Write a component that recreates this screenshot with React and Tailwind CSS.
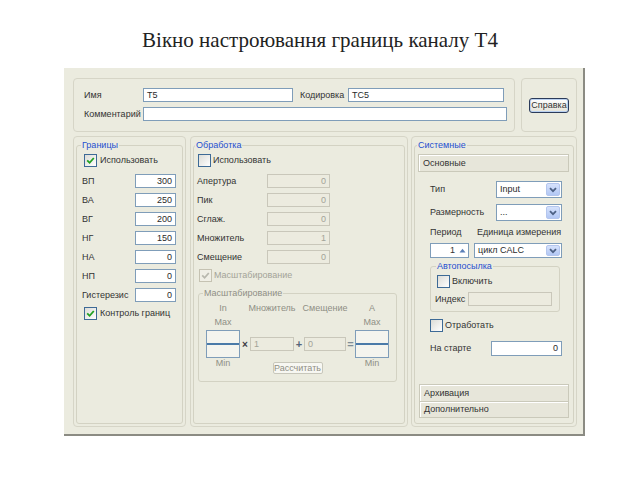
import React from 'react';

const sans = "font-['Liberation_Sans',Arial,sans-serif]";

function Field({ value = '', right = false, disabled = false, className = '' }) {
  return (
    <div
      className={`flex items-center px-[3px] border text-[9px] leading-[11px] ${right ? 'justify-end' : ''} ${
        disabled ? 'border-[#c9c7ba] bg-[#ecebdf] text-[#a3a398]' : 'border-[#7f9db9] bg-white text-[#2a2a2a]'
      } ${className}`}
    >
      {value}
    </div>
  );
}

function Check({ checked = false, disabled = false }) {
  return (
    <div
      className={`w-[13px] h-[13px] shrink-0 border flex items-center justify-center ${
        disabled ? 'border-[#c5c2b2] bg-[#f0efe6]' : 'border-[#3d6a96] bg-linear-to-br from-[#dcdcd7] to-white'
      }`}
    >
      {checked && (
        <svg width="9" height="9" viewBox="0 0 9 9">
          <path d="M1.2 4.4 L3.6 6.8 L7.8 2" fill="none" stroke={disabled ? '#b8b8ae' : '#21a121'} strokeWidth="1.8" />
        </svg>
      )}
    </div>
  );
}

function Combo({ value, className = '' }) {
  return (
    <div className={`flex items-stretch border border-[#7f9db9] bg-white ${className}`}>
      <div className="flex-1 flex items-center pl-[3px] text-[9px] leading-[11px] text-[#2a2a2a]">{value}</div>
      <div className="w-[14px] m-[1px] rounded-[2px] border border-[#b4c6ee] bg-linear-to-b from-[#d6e2fc] to-[#b2c7f4] flex items-center justify-center">
        <svg width="8" height="6" viewBox="0 0 8 6">
          <path d="M1 1.2 L4 4.2 L7 1.2" fill="none" stroke="#4d6185" strokeWidth="1.8" />
        </svg>
      </div>
    </div>
  );
}

function Group({ title, grey = false, legendClass = 'ml-[4px]', className = '', children }) {
  return (
    <fieldset className={`border border-[#d3d2c3] rounded-[3px] ${className}`}>
      <legend className={`${legendClass} px-[1px] text-[9px] leading-[11px] ${grey ? 'text-[#8f8f85]' : 'text-[#1f4fcf]'}`}>
        {title}
      </legend>
      {children}
    </fieldset>
  );
}

function Bar({ children, className = '' }) {
  return (
    <div
      className={`flex items-center pl-[4px] border border-[#cac9ba] bg-[#e7e6da] shadow-[inset_1px_1px_0_#fff] text-[9px] leading-[11px] text-[#333] ${className}`}
    >
      {children}
    </div>
  );
}

const Panel = ({ className = '', children }) => (
  <div className={`flex flex-col border border-[#d6d5c7] rounded-[4px] pt-[3px] px-[2px] pb-[2px] ${className}`}>{children}</div>
);

function Row({ label, value, labelW, inputW, disabled }) {
  return (
    <div className="flex items-center h-[14px]">
      <span className={`${labelW} whitespace-nowrap`}>{label}</span>
      <Field value={value} right disabled={disabled} className={`${inputW} h-[14px]`} />
    </div>
  );
}

function ScaleBox() {
  return (
    <div className="w-[34px] h-[28px] border border-[#7f9db9] bg-[#f4f4ee] flex flex-col justify-center">
      <div className="h-[2px] bg-[#4a7aa8]" />
    </div>
  );
}

export default function App() {
  const limits = [
    ['ВП', '300'],
    ['ВА', '250'],
    ['ВГ', '200'],
    ['НГ', '150'],
    ['НА', '0'],
    ['НП', '0'],
    ['Гистерезис', '0'],
  ];
  const processing = [
    ['Апертура', '0'],
    ['Пик', '0'],
    ['Сглаж.', '0'],
    ['Множитель', '1'],
    ['Смещение', '0'],
  ];

  return (
    <div className={`w-[640px] h-[480px] bg-white flex flex-col ${sans}`}>
      <h1 className="pt-[28px] text-center text-[21px] leading-[24px] font-['Liberation_Serif','Times_New_Roman',serif] text-[#222]">
        Вікно настроювання границь каналу Т4
      </h1>

      <div className="ml-[64px] mt-[16px] w-[521px] h-[368px] bg-[#ebebdf] border-r-2 border-b-2 border-[#8b8b83] pl-[9px] pt-[10px] flex flex-col text-[9px] leading-[11px] text-[#333]">
        {/* name / coding / comment */}
        <div className="flex gap-[6px]">
          <div className="w-[442px] h-[54px] border border-[#d6d5c7] rounded-[4px] pl-[10px] pt-[9px] flex flex-col">
            <div className="flex items-center h-[14px]">
              <span className="w-[59px]">Имя</span>
              <Field value="T5" className="w-[150px] h-[14px]" />
              <span className="ml-[7px] w-[48px]">Кодировка</span>
              <Field value="TC5" className="w-[156px] h-[14px]" />
            </div>
            <div className="flex items-center h-[14px] mt-[5px]">
              <span className="w-[59px]">Комментарий</span>
              <Field className="w-[364px] h-[14px]" />
            </div>
          </div>
          <div className="w-[56px] h-[54px] border border-[#d6d5c7] rounded-[4px] flex items-center justify-center">
            <button className="w-[40px] h-[15px] rounded-[3px] border border-[#2b3b5a] bg-linear-to-b from-white to-[#e4e3d8] shadow-[inset_0_0_0_1px_#b9d0f0] text-[9px] leading-[11px] text-[#333]">
              Справка
            </button>
          </div>
        </div>

        <div className="flex mt-[4px] h-[291px]">
          {/* Границы */}
          <Panel className="w-[113px]">
            <Group title="Границы" legendClass="ml-[4px]" className="flex-1">
              <div className="pl-[5px] pt-[3px] flex flex-col">
                <div className="flex items-center h-[13px] ml-[2px]">
                  <Check checked />
                  <span className="ml-[3px]">Использовать</span>
                </div>
                <div className="mt-[7px] flex flex-col gap-[5px]">
                  {limits.map(([l, v]) => (
                    <Row key={l} label={l} value={v} labelW="w-[53px]" inputW="w-[41px]" />
                  ))}
                </div>
                <div className="flex items-center h-[13px] ml-[2px] mt-[5px]">
                  <Check checked />
                  <span className="ml-[3px]">Контроль границ</span>
                </div>
              </div>
            </Group>
          </Panel>

          {/* Обработка */}
          <Panel className="w-[218px] ml-[4px]">
            <Group title="Обработка" legendClass="ml-[1px]" className="flex-1">
              <div className="pl-[3px] pt-[3px] flex flex-col">
                <div className="flex items-center h-[13px] ml-[1px]">
                  <Check />
                  <span className="ml-[2px]">Использовать</span>
                </div>
                <div className="mt-[7px] flex flex-col gap-[5px]">
                  {processing.map(([l, v]) => (
                    <Row key={l} label={l} value={v} labelW="w-[70px]" inputW="w-[63px]" disabled />
                  ))}
                </div>
                <div className="flex items-center h-[13px] ml-[2px] mt-[5px]">
                  <Check checked disabled />
                  <span className="ml-[2px] text-[#a3a398]">Масштабирование</span>
                </div>

                <Group title="Масштабирование" grey legendClass="ml-[4px]" className="ml-[1px] mt-[6px] w-[199px] pb-[7px]">
                  <div className="pl-[7px] flex flex-col text-[#8f8f85]">
                    <div className="flex mt-[4px] h-[11px] whitespace-nowrap">
                      <span className="w-[34px] flex justify-center">In</span>
                      <span className="w-[10px]" />
                      <span className="w-[44px] flex justify-center">Множитель</span>
                      <span className="w-[10px]" />
                      <span className="w-[42px] flex justify-center">Смещение</span>
                      <span className="w-[9px]" />
                      <span className="w-[34px] flex justify-center">A</span>
                    </div>
                    <div className="flex justify-between w-[183px] mt-[3px] h-[11px]">
                      <span className="w-[34px] text-center">Max</span>
                      <span className="w-[34px] text-center">Max</span>
                    </div>
                    <div className="flex items-center mt-[2px] h-[28px]">
                      <ScaleBox />
                      <span className="w-[10px] text-center font-bold text-[10px] text-[#3c3c44]">×</span>
                      <Field value="1" disabled className="w-[44px] h-[14px]" />
                      <span className="w-[10px] text-center font-bold text-[11px] text-[#55657a]">+</span>
                      <Field value="0" disabled className="w-[42px] h-[14px]" />
                      <span className="w-[9px] text-center font-bold text-[11px] text-[#7f8c96]">=</span>
                      <ScaleBox />
                    </div>
                    <div className="flex items-start h-[16px]">
                      <span className="w-[34px] text-center">Min</span>
                      <div className="w-[115px] flex justify-center">
                        <button className="mt-[4px] w-[50px] h-[12px] border border-[#c8c7bb] rounded-[2px] bg-[#f7f7f2] text-[9px] leading-[10px] text-[#8f8f85]">
                          Рассчитать
                        </button>
                      </div>
                      <span className="w-[34px] text-center">Min</span>
                    </div>
                  </div>
                </Group>
              </div>
            </Group>
          </Panel>

          {/* Системные */}
          <Panel className="w-[166px] ml-[3px]">
            <Group title="Системные" legendClass="ml-[2px]" className="flex-1 flex flex-col pb-[5px]">
              <Bar className="ml-[3px] mt-[3px] w-[151px] h-[18px]">Основные</Bar>
              <div className="pl-[15px] w-[147px] flex flex-col">
                <div className="flex items-center justify-between h-[17px] mt-[9px]">
                  <span>Тип</span>
                  <Combo value="Input" className="w-[66px] h-[17px]" />
                </div>
                <div className="flex items-center justify-between h-[17px] mt-[6px]">
                  <span>Размерность</span>
                  <Combo value="..." className="w-[66px] h-[17px]" />
                </div>
                <div className="flex h-[11px] mt-[6px]">
                  <span className="w-[47px]">Период</span>
                  <span>Единица измерения</span>
                </div>
                <div className="flex items-center h-[15px] mt-[5px]">
                  <div className="w-[39px] h-[15px] border border-[#7f9db9] bg-white flex items-stretch">
                    <div className="flex-1 flex items-center justify-end pr-[2px]">1</div>
                    <div className="w-[11px] flex items-center justify-center">
                      <svg width="7" height="5" viewBox="0 0 7 5">
                        <path d="M0.5 4.5 L3.5 0.8 L6.5 4.5 Z" fill="#5a7fb8" />
                      </svg>
                    </div>
                  </div>
                  <Combo value="цикл CALC" className="ml-[5px] w-[88px] h-[15px]" />
                </div>

                <Group title="Автопосылка" legendClass="ml-[5px]" className="mt-[3px] w-[130px] pb-[5px]">
                  <div className="flex items-center h-[13px] mt-[3px] ml-[6px]">
                    <Check />
                    <span className="ml-[2px]">Включить</span>
                  </div>
                  <div className="flex items-center h-[14px] mt-[4px] pl-[4px]">
                    <span className="w-[33px]">Индекс</span>
                    <Field disabled className="w-[84px] h-[14px]" />
                  </div>
                </Group>

                <div className="flex items-center h-[13px] mt-[7px]">
                  <Check />
                  <span className="ml-[2px]">Отработать</span>
                </div>
                <div className="flex items-center justify-between h-[15px] mt-[9px]">
                  <span>На старте</span>
                  <Field value="0" right className="w-[71px] h-[15px]" />
                </div>
              </div>

              <div className="mt-auto ml-[4px] w-[150px] flex flex-col">
                <Bar className="h-[18px]">Архивация</Bar>
                <Bar className="h-[17px] -mt-px">Дополнительно</Bar>
              </div>
            </Group>
          </Panel>
        </div>
      </div>
    </div>
  );
}
